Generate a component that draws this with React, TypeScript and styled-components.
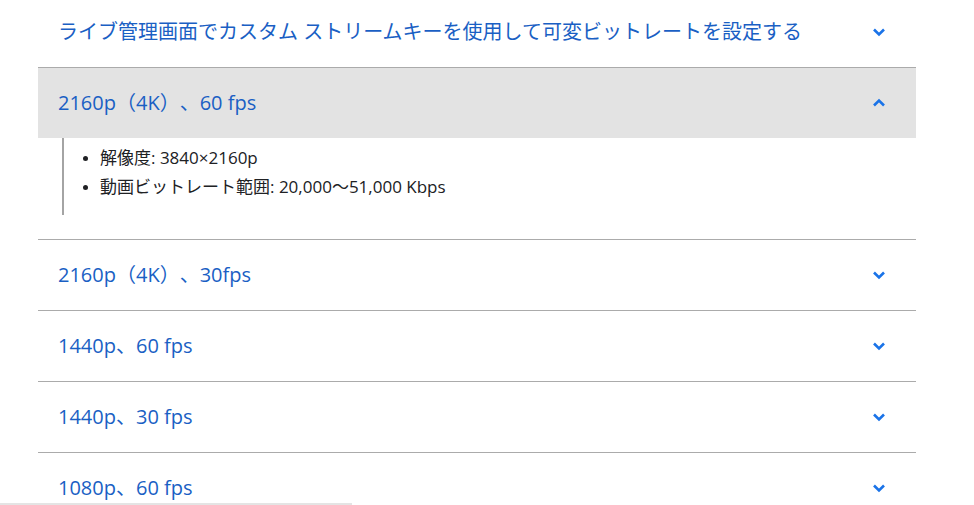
import React from "react";
import styled, { createGlobalStyle } from "styled-components";

const Global = createGlobalStyle`
  html, body { margin: 0; padding: 0; background: #fff; overflow: hidden; }
  body { font-family: "Open Sans", "Noto Sans CJK JP", sans-serif; }
`;

const Page = styled.div`
  width: 974px;
  height: 505px;
  overflow: hidden;
`;

const List = styled.div`
  margin: -3px 0 0 38px;
  width: 878px;
`;

const Item = styled.div`
  border-bottom: 1px solid #ababab;
`;

const Header = styled.div<{ $open?: boolean }>`
  height: 70px;
  display: flex;
  align-items: center;
  justify-content: space-between;
  padding: 0 25px 0 20px;
  background: ${(p) => (p.$open ? "#e3e3e3" : "transparent")};
`;

const Title = styled.span`
  font-family: "Open Sans", "Noto Sans CJK JP", sans-serif;
  font-size: 20px;
  line-height: 28px;
  color: #1a5fc4;
  white-space: nowrap;
  text-spacing-trim: space-all;
`;

const Chevron = styled.svg<{ $up?: boolean }>`
  width: 24px;
  height: 24px;
  fill: none;
  stroke: #1a73e8;
  stroke-width: 2.6;
  transform: ${(p) => (p.$up ? "rotate(180deg)" : "none")};
  flex-shrink: 0;
`;

const Body = styled.div`
  margin: 0 0 24px 24px;
  border-left: 2px solid #a4a4a4;
  padding: 5px 0 14px;
`;

const Bullets = styled.ul`
  margin: 0;
  padding: 0 0 0 36px;
  list-style: disc;
`;

const Bullet = styled.li`
  font-family: "Open Sans", "Noto Sans CJK JP", sans-serif;
  font-size: 17px;
  line-height: 29px;
  color: #202124;
  &::marker { font-size: 14px; }
`;

const ScrollHint = styled.div`
  position: fixed;
  left: 0;
  bottom: 0;
  width: 352px;
  height: 2px;
  background: #e4e4e4;
`;

const Icon = ({ up }: { up?: boolean }) => (
  <Chevron $up={up} viewBox="0 0 24 24">
    <polyline points="7,9.5 12,14.5 17,9.5" />
  </Chevron>
);

const rows = [
  { title: "ライブ管理画面でカスタム ストリームキーを使用して可変ビットレートを設定する" },
  {
    title: "2160p（4K）、60 fps",
    open: true,
    items: ["解像度: 3840×2160p", "動画ビットレート範囲: 20,000〜51,000 Kbps"],
  },
  { title: "2160p（4K）、30fps" },
  { title: "1440p、60 fps" },
  { title: "1440p、30 fps" },
  { title: "1080p、60 fps" },
];

export default function App() {
  return (
    <Page>
      <Global />
      <List>
        {rows.map((r) => (
          <Item key={r.title}>
            <Header $open={r.open}>
              <Title>{r.title}</Title>
              <Icon up={r.open} />
            </Header>
            {r.open && r.items && (
              <Body>
                <Bullets>
                  {r.items.map((t) => (
                    <Bullet key={t}>{t}</Bullet>
                  ))}
                </Bullets>
              </Body>
            )}
          </Item>
        ))}
      </List>
      <ScrollHint />
    </Page>
  );
}
